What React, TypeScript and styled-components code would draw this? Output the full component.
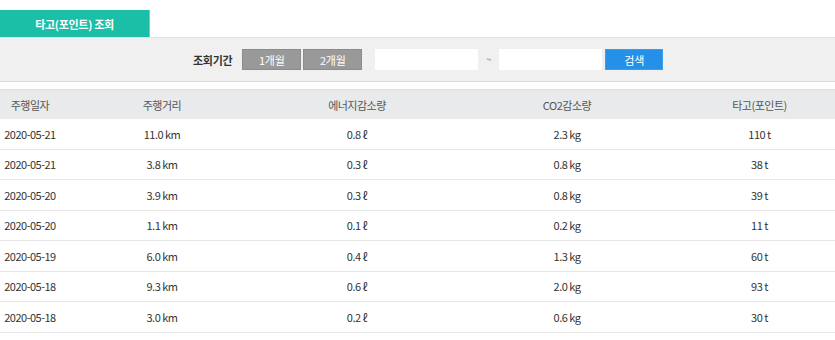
import React from 'react'
import styled, { createGlobalStyle } from 'styled-components'

const GlobalStyle = createGlobalStyle`
  body {
    margin: 0;
    background: #fff;
    font-family: "Noto Sans CJK KR", "Noto Sans", sans-serif;
    color: #333;
  }
`

const rows = [
  { date: '2020-05-21', dist: '11.0 km', energy: '0.8 ℓ', co2: '2.3 kg', point: '110 t' },
  { date: '2020-05-21', dist: '3.8 km', energy: '0.3 ℓ', co2: '0.8 kg', point: '38 t' },
  { date: '2020-05-20', dist: '3.9 km', energy: '0.3 ℓ', co2: '0.8 kg', point: '39 t' },
  { date: '2020-05-20', dist: '1.1 km', energy: '0.1 ℓ', co2: '0.2 kg', point: '11 t' },
  { date: '2020-05-19', dist: '6.0 km', energy: '0.4 ℓ', co2: '1.3 kg', point: '60 t' },
  { date: '2020-05-18', dist: '9.3 km', energy: '0.6 ℓ', co2: '2.0 kg', point: '93 t' },
  { date: '2020-05-18', dist: '3.0 km', energy: '0.2 ℓ', co2: '0.6 kg', point: '30 t' },
]

const App = () => {
  return (
    <Page>
      <GlobalStyle />
      <Tabs>
        <Tab>타고(포인트) 조회</Tab>
      </Tabs>
      <SearchBar>
        <Label>조회기간</Label>
        <Periods>
          <PeriodBtn>1개월</PeriodBtn>
          <PeriodBtn>2개월</PeriodBtn>
        </Periods>
        <DateInput type="text" />
        <Tilde>~</Tilde>
        <DateInput type="text" />
        <SearchBtn>검색</SearchBtn>
      </SearchBar>
      <Table>
        <colgroup>
          <col style={{ width: 60 }} />
          <col style={{ width: 204 }} />
          <col style={{ width: 186 }} />
          <col style={{ width: 234 }} />
          <col style={{ width: 151 }} />
        </colgroup>
        <thead>
          <tr>
            <Th>주행일자</Th>
            <Th>주행거리</Th>
            <Th>에너지감소량</Th>
            <Th>CO2감소량</Th>
            <Th>타고(포인트)</Th>
          </tr>
        </thead>
        <tbody>
          {rows.map((r, i) => (
            <tr key={i}>
              <Td>{r.date}</Td>
              <Td>{r.dist}</Td>
              <Td>{r.energy}</Td>
              <Td>{r.co2}</Td>
              <Td>{r.point}</Td>
            </tr>
          ))}
        </tbody>
      </Table>
    </Page>
  )
}

export default App

const Page = styled.div`
  width: 835px;
  padding-top: 10px;
`

const Tabs = styled.div`
  display: flex;
`

const Tab = styled.div`
  width: 149px;
  height: 27px;
  background-color: #1bbfa8;
  border-right: 1px solid #5fd8c6;
  color: #fff;
  font-size: 11px;
  font-weight: 700;
  letter-spacing: -0.3px;
  display: flex;
  align-items: center;
  justify-content: center;
`

const SearchBar = styled.div`
  height: 43px;
  background-color: #f0f0f0;
  border-top: 1px solid #e2e2e2;
  border-bottom: 1px solid #dcdcdc;
  display: flex;
  align-items: center;
  padding-left: 193px;
  box-sizing: content-box;
`

const Label = styled.span`
  font-size: 11px;
  font-weight: 700;
  letter-spacing: -0.3px;
  color: #333;
  margin-right: 10px;
`

const Periods = styled.div`
  display: flex;
  gap: 2px;
  margin-right: 13px;
`

const PeriodBtn = styled.button`
  width: 59px;
  height: 21px;
  background-color: #999;
  border: 1px solid #8c8c8c;
  color: #fff;
  font-family: inherit;
  font-size: 11px;
  letter-spacing: -0.3px;
  padding: 0;
  box-sizing: border-box;
`

const DateInput = styled.input`
  width: 103px;
  height: 21px;
  border: none;
  background: #fff;
  box-sizing: border-box;
  padding: 0;
`

const Tilde = styled.span`
  width: 21px;
  text-align: center;
  font-size: 9px;
  color: #666;
`

const SearchBtn = styled.button`
  width: 58px;
  height: 21px;
  margin-left: 3px;
  background-color: #2590e8;
  border: 1px solid #3d9deb;
  color: #fff;
  font-family: inherit;
  font-size: 11px;
  padding: 0;
  box-sizing: border-box;
`

const Table = styled.table`
  width: 835px;
  margin-top: 7px;
  border-collapse: collapse;
  table-layout: fixed;
`

const Th = styled.th`
  height: 29px;
  background-color: #e8eaeb;
  border-top: 1px solid #dcdfe0;
  font-size: 11px;
  font-weight: 400;
  letter-spacing: -0.5px;
  color: #555;
  text-align: center;
  padding: 0;
  white-space: nowrap;
`

const Td = styled.td`
  height: 29.5px;
  border-bottom: 1px solid #e6e6e6;
  font-size: 11px;
  letter-spacing: -0.5px;
  color: #333;
  text-align: center;
  padding: 0;
  white-space: nowrap;
`
